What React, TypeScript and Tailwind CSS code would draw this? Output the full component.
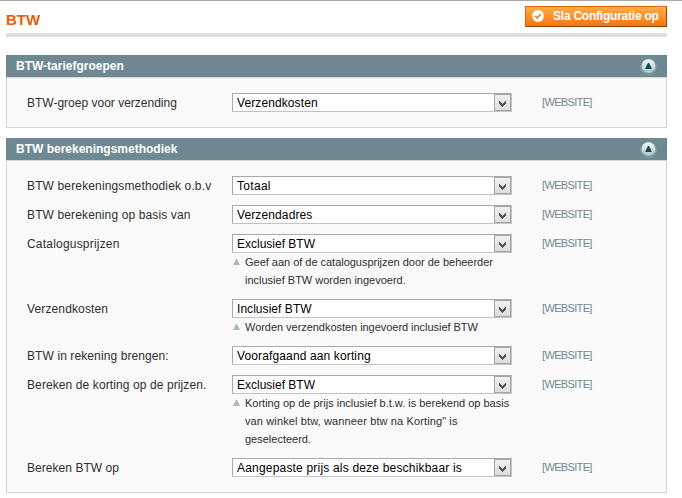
type Note = { text: string; tracking?: string };
type Field = { label: string; labelTracking?: string; value: string; valueTracking?: string; notes?: Note[] };

const taxClasses: Field[] = [
  { label: 'BTW-groep voor verzending', value: 'Verzendkosten', valueTracking: 'tracking-[0.1px]' },
];

const calculation: Field[] = [
  {
    label: 'BTW berekeningsmethodiek o.b.v',
    labelTracking: 'tracking-[0.14px]',
    value: 'Totaal',
    valueTracking: 'tracking-[0.3px]',
  },
  {
    label: 'BTW berekening op basis van',
    labelTracking: 'tracking-[0.13px]',
    value: 'Verzendadres',
    valueTracking: 'tracking-[0.12px]',
  },
  {
    label: 'Catalogusprijzen',
    labelTracking: 'tracking-[0.2px]',
    value: 'Exclusief BTW',
    valueTracking: 'tracking-[0px]',
    notes: [
      { text: 'Geef aan of de catalogusprijzen door de beheerder', tracking: 'tracking-[-0.02px]' },
      { text: 'inclusief BTW worden ingevoerd.' },
    ],
  },
  {
    label: 'Verzendkosten',
    labelTracking: 'tracking-[0.13px]',
    value: 'Inclusief BTW',
    valueTracking: 'tracking-[0.05px]',
    notes: [{ text: 'Worden verzendkosten ingevoerd inclusief BTW', tracking: 'tracking-[-0.04px]' }],
  },
  {
    label: 'BTW in rekening brengen:',
    labelTracking: 'tracking-[0.1px]',
    value: 'Voorafgaand aan korting',
    valueTracking: 'tracking-[0.13px]',
  },
  {
    label: 'Bereken de korting op de prijzen.',
    labelTracking: 'tracking-[0.1px]',
    value: 'Exclusief BTW',
    valueTracking: 'tracking-[0px]',
    notes: [
      { text: 'Korting op de prijs inclusief b.t.w. is berekend op basis' },
      { text: 'van winkel btw, wanneer btw na Korting" is', tracking: 'tracking-[0.12px]' },
      { text: 'geselecteerd.' },
    ],
  },
  {
    label: 'Bereken BTW op',
    labelTracking: 'tracking-[0.05px]',
    value: 'Aangepaste prijs als deze beschikbaar is',
    valueTracking: 'tracking-[0.19px]',
  },
];

function SelectBox({ value, tracking = '' }: { value: string; tracking?: string }) {
  return (
    <div className="flex h-[19px] w-[280px] border border-[#a9a9a9] border-b-[#c3c3c3] border-r-[#c3c3c3] bg-white">
      <span className={`flex-1 whitespace-nowrap pl-1 text-[12px] leading-[18px] text-black ${tracking}`}>{value}</span>
      <span className="flex h-[17px] w-[17px] items-center justify-center border border-[#a5a5a5] bg-gradient-to-b from-[#f1f1f1] to-[#dcdcdc]">
        <svg width="7" height="6" viewBox="0 0 7 6" className="mt-[2px]" shapeRendering="crispEdges" fill="#555">
          <path d="M0 0h1v1h1v1h1v1h1v-1h1v-1h1v-1h1v3h-1v1h-1v1h-1v1h-1v-1h-1v-1h-1v-1h-1z" />
        </svg>
      </span>
    </div>
  );
}

function Row({ field }: { field: Field }) {
  return (
    <div className="flex items-start">
      <div className={`h-[19px] w-[205px] whitespace-nowrap text-[12px] leading-[20px] text-[#2f2f2f] ${field.labelTracking ?? ''}`}>
        {field.label}
      </div>
      <div className="w-[310px]">
        <SelectBox value={field.value} tracking={field.valueTracking} />
        {field.notes && (
          <div className="flex">
            <svg width="7" height="6" viewBox="0 0 7 6" className="ml-[1px] mt-[6px]">
              <path d="M3 0h1L7 6H0z" fill="#a8b9bd" />
            </svg>
            <div className="ml-[5px] whitespace-nowrap text-[11px] leading-[18px] text-[#2f2f2f]">
              {field.notes.map((note) => (
                <div key={note.text} className={note.tracking}>
                  {note.text}
                </div>
              ))}
            </div>
          </div>
        )}
      </div>
      <div className="text-[11px] leading-[18px] tracking-[-0.65px] text-[#6f8992]">[WEBSITE]</div>
    </div>
  );
}

function Section({ title, fields }: { title: string; fields: Field[] }) {
  return (
    <section>
      <div className="flex h-[22px] items-center justify-between bg-[#6f8992] pl-[10px] pr-[10px]">
        <h2 className="text-[12px] font-bold leading-[22px] text-white">{title}</h2>
        <svg width="17" height="17" viewBox="0 0 17 17">
          <defs>
            <linearGradient id="orb" x1="0" y1="0" x2="0" y2="1">
              <stop offset="0" stopColor="#f4f7f8" />
              <stop offset="1" stopColor="#a9c3c9" />
            </linearGradient>
          </defs>
          <circle cx="8.5" cy="8.9" r="7.6" fill="none" stroke="#94abb2" strokeWidth="0.8" />
          <circle cx="8.5" cy="8.2" r="6.9" fill="url(#orb)" />
          <path d="M8 5h1l2.6 5v1H5.4v-1z" fill="#174958" />
        </svg>
      </div>
      <div className="flex flex-col gap-[10px] border border-[#d6d6d6] bg-[#fafafa] py-[15px] pl-[20px]">
        {fields.map((field) => (
          <Row key={field.label} field={field} />
        ))}
      </div>
    </section>
  );
}

export default function App() {
  return (
    <main className="h-[498px] w-[682px] overflow-hidden border-t border-[#a9a9a9] bg-white pl-[6px] pr-[15px] font-['Liberation_Sans',Arial,sans-serif]">
      <header className="flex h-[36px] justify-between border-b-4 border-[#dfdfdf] pt-[5px]">
        <h1 className="text-[15px] font-bold leading-[27px] text-[#eb5e00]">BTW</h1>
        <button className="flex h-[21px] w-[142px] items-start border border-[#ed6502] border-b-[#a04300] border-r-[#a04300] bg-gradient-to-b from-[#ffac47] to-[#f77403] pl-[6px] text-[12px] font-bold text-white">
          <svg width="12" height="12" viewBox="0 0 12 12" className="mt-[3px]">
            <circle cx="6" cy="6" r="5.9" fill="#fff" />
            <path d="M3.2 6l2 2.2L8.8 4" fill="none" stroke="#f28a2c" strokeWidth="1.8" />
          </svg>
          <span className="ml-[9px] whitespace-nowrap leading-[19px] tracking-[-0.23px]">Sla Configuratie op</span>
        </button>
      </header>
      <div className="mt-[18px] flex flex-col gap-[10px]">
        <Section title="BTW-tariefgroepen" fields={taxClasses} />
        <Section title="BTW berekeningsmethodiek" fields={calculation} />
      </div>
    </main>
  );
}
